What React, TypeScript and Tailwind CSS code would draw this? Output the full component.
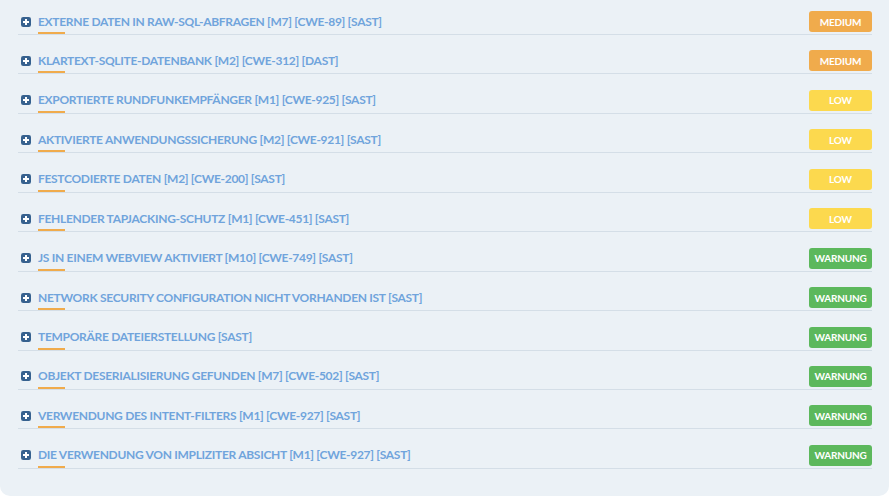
import React from "react";

type Sev = "MEDIUM" | "LOW" | "WARNUNG";

const rows: { t: string; s: Sev }[] = [
  { t: "EXTERNE DATEN IN RAW-SQL-ABFRAGEN [M7] [CWE-89] [SAST]", s: "MEDIUM" },
  { t: "KLARTEXT-SQLITE-DATENBANK [M2] [CWE-312] [DAST]", s: "MEDIUM" },
  { t: "EXPORTIERTE RUNDFUNKEMPFÄNGER [M1] [CWE-925] [SAST]", s: "LOW" },
  { t: "AKTIVIERTE ANWENDUNGSSICHERUNG [M2] [CWE-921] [SAST]", s: "LOW" },
  { t: "FESTCODIERTE DATEN [M2] [CWE-200] [SAST]", s: "LOW" },
  { t: "FEHLENDER TAPJACKING-SCHUTZ [M1] [CWE-451] [SAST]", s: "LOW" },
  { t: "JS IN EINEM WEBVIEW AKTIVIERT [M10] [CWE-749] [SAST]", s: "WARNUNG" },
  { t: "NETWORK SECURITY CONFIGURATION NICHT VORHANDEN IST [SAST]", s: "WARNUNG" },
  { t: "TEMPORÄRE DATEIERSTELLUNG [SAST]", s: "WARNUNG" },
  { t: "OBJEKT DESERIALISIERUNG GEFUNDEN [M7] [CWE-502] [SAST]", s: "WARNUNG" },
  { t: "VERWENDUNG DES INTENT-FILTERS [M1] [CWE-927] [SAST]", s: "WARNUNG" },
  { t: "DIE VERWENDUNG VON IMPLIZITER ABSICHT [M1] [CWE-927] [SAST]", s: "WARNUNG" },
];

function Badge({ s }: { s: Sev }) {
  const cls =
    s === "MEDIUM"
      ? "bg-[#f0ab4c]"
      : s === "LOW"
      ? "bg-[#fcd94e]"
      : "bg-[#5cb85c]";
  return (
    <span
      className={`${cls} flex h-[21px] w-[63px] items-center justify-center rounded-[3px] text-[10px] font-bold leading-none tracking-[-0.2px] text-white`}
    >
      {s}
    </span>
  );
}

function PlusIcon() {
  return (
    <svg width="10" height="10" viewBox="0 0 10 10" className="shrink-0">
      <rect x="0" y="0" width="10" height="10" rx="2.2" fill="#36618f" />
      <rect x="2" y="4" width="6" height="2" fill="#ffffff" />
      <rect x="4" y="2" width="2" height="6" fill="#ffffff" />
    </svg>
  );
}

export default function App() {
  return (
    <div className="h-[500px] w-[891px] bg-white" style={{ fontFamily: "Lato, 'Open Sans', sans-serif" }}>
      <div className="h-[496px] w-[889px] rounded-b-[10px] bg-[#ebf1f6] pt-[11px]">
        <div className="ml-[18px] w-[854px]">
          {rows.map((r, i) => (
            <div key={i} className="mb-[15.45px] border-b border-[#d4dee7]">
              <div className="flex h-[21px] items-center justify-between">
                <div className="flex items-center">
                  <span className="ml-[3px] mr-[7px] flex">
                    <PlusIcon />
                  </span>
                  <span className="text-[12px] font-bold tracking-[-0.3px] text-[#70a4dc]">
                    {r.t}
                  </span>
                </div>
                <Badge s={r.s} />
              </div>
              <div className="ml-[20px] h-[2px] w-[27px] bg-[#f0ab4c]" />
            </div>
          ))}
        </div>
      </div>
    </div>
  );
}
